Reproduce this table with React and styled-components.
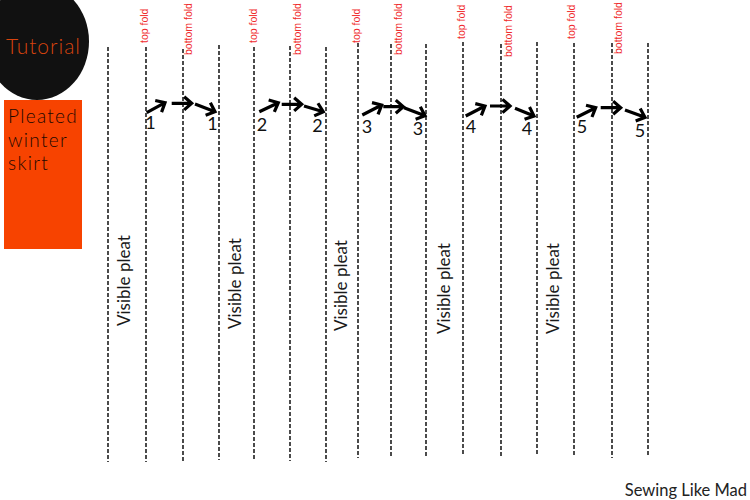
import React from "react";
import styled, { createGlobalStyle } from "styled-components";

const GlobalStyle = createGlobalStyle`
  html, body {
    margin: 0;
    padding: 0;
    width: 750px;
    height: 500px;
    overflow: hidden;
    background: #ffffff;
  }
  #root { width: 750px; height: 500px; }
`;

const Page = styled.div`
  position: relative;
  width: 750px;
  height: 500px;
  overflow: hidden;
  display: flex;
  background: #ffffff;
  font-family: Lato, "Open Sans", sans-serif;
`;

const Sidebar = styled.aside`
  width: 90px;
  flex-shrink: 0;
  box-sizing: border-box;
  padding-left: 4px;
  display: flex;
  flex-direction: column;
  align-items: flex-start;
`;

const Badge = styled.div`
  width: 104px;
  height: 117px;
  margin: -17px 0 0 -19px;
  border-radius: 50%;
  background: #111111;
  box-sizing: border-box;
  padding: 7px 0 0 13px;
  display: flex;
  align-items: center;
  justify-content: center;
  color: #d8440e;
  font-family: Lato, sans-serif;
  font-weight: 300;
  font-size: 21px;
  letter-spacing: 1px;
`;

const Card = styled.div`
  width: 78px;
  height: 149px;
  background: #f74300;
  box-sizing: border-box;
  padding: 4px 0 0 4px;
  color: #1e0800;
  font-family: Lato, sans-serif;
  font-weight: 300;
  font-size: 19px;
  line-height: 23.5px;
  letter-spacing: 1.3px;
`;

const CardLine = styled.div`
  white-space: nowrap;
`;

const Main = styled.main`
  width: 660px;
  display: flex;
  flex-direction: column;
`;

const Canvas = styled.svg`
  display: block;
  width: 660px;
  height: 472px;
  overflow: visible;
`;

const DashLine = styled.line`
  stroke: #1e1e1e;
  stroke-width: 1.6;
  stroke-dasharray: 4 2;
`;

const ArrowPath = styled.path`
  fill: none;
  stroke: #000000;
  stroke-width: 3.2;
  stroke-linejoin: miter;
`;

const FoldLabel = styled.text`
  font-family: "Liberation Sans", Arial, sans-serif;
  font-size: 10.5px;
  fill: #f02c2c;
`;

const PleatLabel = styled.text`
  font-family: Lato, sans-serif;
  font-size: 17px;
  fill: #1a1a1a;
`;

const StepNumber = styled.text`
  font-family: Lato, sans-serif;
  font-size: 18px;
  fill: #111111;
`;

const Footer = styled.footer`
  display: flex;
  justify-content: flex-end;
  padding-right: 3px;
  margin-top: 8px;
  font-family: Lato, sans-serif;
  font-size: 16.5px;
  line-height: 20px;
  color: #222222;
`;

const lines = [
  { x: 108, t: 47, b: 462 },
  { x: 146, t: 47, b: 462 },
  { x: 183, t: 49, b: 463 },
  { x: 219, t: 45, b: 460 },
  { x: 254, t: 47, b: 461 },
  { x: 290, t: 46, b: 461 },
  { x: 326, t: 47, b: 462 },
  { x: 358, t: 43, b: 458 },
  { x: 391, t: 44, b: 458 },
  { x: 426, t: 44, b: 458 },
  { x: 463, t: 42, b: 456 },
  { x: 501, t: 44, b: 458 },
  { x: 537, t: 42, b: 456 },
  { x: 574, t: 43, b: 457 },
  { x: 612, t: 43, b: 458 },
  { x: 648, t: 43, b: 457 },
];

const folds = [
  { text: "top fold", x: 148, y: 43 },
  { text: "bottom fold", x: 191.5, y: 55 },
  { text: "top fold", x: 257, y: 43 },
  { text: "bottom fold", x: 301, y: 55 },
  { text: "top fold", x: 360, y: 43 },
  { text: "bottom fold", x: 401.5, y: 55 },
  { text: "top fold", x: 464.5, y: 39 },
  { text: "bottom fold", x: 511.5, y: 57 },
  { text: "top fold", x: 574.5, y: 39 },
  { text: "bottom fold", x: 621.5, y: 54 },
];

const pleats = [
  { x: 130, y: 326 },
  { x: 241, y: 329 },
  { x: 347, y: 331 },
  { x: 450, y: 334 },
  { x: 559, y: 334 },
];

const arrows = [
  [146.7, 112.7, 165, 102.7],
  [171.7, 103.3, 191.7, 103.3],
  [195, 104, 215, 111.7],
  [259.3, 111.7, 278.3, 102.7],
  [281.7, 104.3, 301.7, 104.3],
  [304, 106, 323.3, 111.7],
  [362.3, 115, 381.7, 105],
  [383.3, 106.7, 403.3, 106.7],
  [404, 107.7, 425, 115.7],
  [465.7, 116, 485, 106],
  [490, 106, 510, 106],
  [515, 108.3, 534, 116],
  [576.7, 117.3, 595.7, 107.7],
  [600.7, 107.7, 620.7, 107.7],
  [625, 110, 645, 117.3],
];

const numbers = [
  { t: "1", x: 150.5, y: 129 },
  { t: "1", x: 212.5, y: 130 },
  { t: "2", x: 262, y: 130.7 },
  { t: "2", x: 317.5, y: 131.7 },
  { t: "3", x: 367, y: 132.7 },
  { t: "3", x: 418, y: 135 },
  { t: "4", x: 471, y: 132.7 },
  { t: "4", x: 527, y: 135 },
  { t: "5", x: 582, y: 133.3 },
  { t: "5", x: 640, y: 136.7 },
];

function Arrow({ x1, y1, x2, y2 }) {
  const ang = Math.atan2(y2 - y1, x2 - x1);
  const L = 10;
  const spread = 0.72;
  const ax = x2 - L * Math.cos(ang - spread);
  const ay = y2 - L * Math.sin(ang - spread);
  const bx = x2 - L * Math.cos(ang + spread);
  const by = y2 - L * Math.sin(ang + spread);
  const d = `M ${x1} ${y1} L ${x2} ${y2} M ${ax} ${ay} L ${x2} ${y2} L ${bx} ${by}`;
  return <ArrowPath d={d} />;
}

export default function App() {
  return (
    <>
      <GlobalStyle />
      <Page>
        <Sidebar>
          <Badge>Tutorial</Badge>
          <Card>
            <CardLine>Pleated</CardLine>
            <CardLine>winter</CardLine>
            <CardLine>skirt</CardLine>
          </Card>
        </Sidebar>
        <Main>
          <Canvas viewBox="90 0 660 472">
            {lines.map((l, i) => (
              <DashLine key={i} x1={l.x} y1={l.t} x2={l.x} y2={l.b} />
            ))}
            {folds.map((f, i) => (
              <FoldLabel key={i} transform={`translate(${f.x} ${f.y}) rotate(-90)`}>
                {f.text}
              </FoldLabel>
            ))}
            {pleats.map((p, i) => (
              <PleatLabel key={i} transform={`translate(${p.x} ${p.y}) rotate(-90)`}>
                Visible pleat
              </PleatLabel>
            ))}
            {arrows.map((a, i) => (
              <Arrow key={i} x1={a[0]} y1={a[1]} x2={a[2]} y2={a[3]} />
            ))}
            {numbers.map((n, i) => (
              <StepNumber key={i} x={n.x} y={n.y} textAnchor="middle">
                {n.t}
              </StepNumber>
            ))}
          </Canvas>
          <Footer>Sewing Like Mad</Footer>
        </Main>
      </Page>
    </>
  );
}
